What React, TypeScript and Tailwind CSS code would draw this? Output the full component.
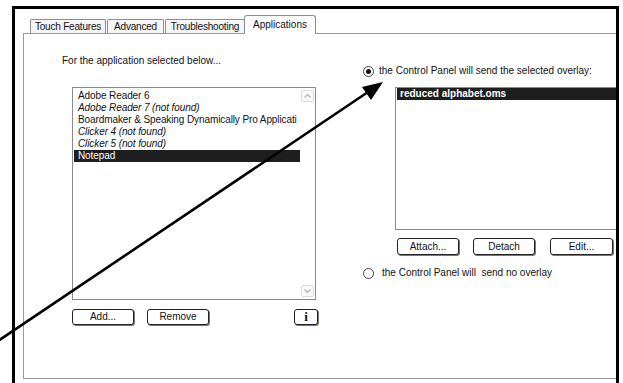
import React from "react";

const font = { fontFamily: '"Liberation Sans", Arial, sans-serif' };

function Tab({ label, w, selected }: { label: string; w: string; selected?: boolean }) {
  if (selected) {
    return (
      <div
        className={`relative z-10 -mb-px -ml-[2px] flex h-[19px] ${w} items-start justify-center rounded-t-[3px] border border-b-0 border-[#8c8c8c] bg-white pt-[3px] text-[10px] leading-[12px] text-[#111]`}
      >
        {label}
      </div>
    );
  }
  return (
    <div
      className={`flex h-[14px] ${w} items-center justify-center whitespace-nowrap rounded-t-[2px] border border-b-0 border-[#8c8c8c] bg-[#f6f6f6] pt-px text-[10px] leading-[12px] tracking-[-0.2px] text-[#111]`}
    >
      {label}
    </div>
  );
}

function Chevron({ up }: { up?: boolean }) {
  return (
    <div className="flex h-[12px] w-[13px] items-center justify-center rounded-[2px] border border-[#dcdcdc] bg-[#fafafa]">
      <svg width="7" height="4" viewBox="0 0 7 4">
        <path
          d={up ? "M0.5 3.5 L3.5 0.5 L6.5 3.5" : "M0.5 0.5 L3.5 3.5 L6.5 0.5"}
          fill="none"
          stroke="#b4b4b4"
          strokeWidth="1.2"
        />
      </svg>
    </div>
  );
}

function Btn({ label, w, h = "h-[16px]", serif }: { label: string; w: string; h?: string; serif?: boolean }) {
  return (
    <div
      className={`flex ${w} ${h} items-center justify-center rounded-[3px] border border-[#222] bg-white text-[10px] leading-[12px] text-[#111] shadow-[1px_1px_0_0_#777]`}
    >
      {serif ? (
        <span className="text-[13px] font-bold" style={{ fontFamily: '"Liberation Serif", serif' }}>
          {label}
        </span>
      ) : (
        label
      )}
    </div>
  );
}

function Radio({ checked }: { checked?: boolean }) {
  return (
    <div className="flex h-[11px] w-[11px] shrink-0 items-center justify-center rounded-full border border-[#444] bg-white">
      {checked && <div className="h-[5px] w-[5px] rounded-full bg-[#111]" />}
    </div>
  );
}

const apps = [
  { name: "Adobe Reader 6" },
  { name: "Adobe Reader 7 (not found)", missing: true },
  { name: "Boardmaker & Speaking Dynamically Pro Applicati" },
  { name: "Clicker 4 (not found)", missing: true },
  { name: "Clicker 5 (not found)", missing: true },
  { name: "Notepad", selected: true },
];

export default function App() {
  return (
    <div className="relative h-[383px] w-[623px] overflow-hidden bg-white pl-[12px] pt-[6px]" style={font}>
      <div className="h-[400px] w-[607px] overflow-hidden border-x-[3px] border-t-[3px] border-black bg-white pl-[8px] pt-[6px]">
        {/* tabs */}
        <div className="ml-[7px] flex h-[18px] items-end gap-px">
          <Tab label="Touch Features" w="w-[76px]" />
          <Tab label="Advanced" w="w-[57px]" />
          <Tab label="Troubleshooting" w="w-[80px]" />
          <Tab label="Applications" w="w-[72px]" selected />
        </div>

        {/* panel */}
        <div className="flex h-[346px] w-[620px] border border-[#9a9a9a] bg-white">
          {/* left column */}
          <div className="w-[294px] shrink-0 pl-[38px] pt-[21px]">
            <p className="h-[12px] text-[10px] leading-[12px] text-[#111]">For the application selected below...</p>
            <div className="ml-[10px] mt-[20px] flex h-[213px] w-[244px] border border-[#8a8a8a] bg-white">
              <div className="ml-px w-[226px] overflow-hidden pt-[2px]">
                {apps.map((a) => (
                  <div
                    key={a.name}
                    className={`h-[12px] whitespace-nowrap pl-[4px] text-[10px] leading-[12px] tracking-[-0.1px] ${
                      a.selected ? "bg-[#1e1e1e] text-white" : "text-[#111]"
                    } ${a.missing ? "italic" : ""}`}
                  >
                    {a.name}
                  </div>
                ))}
              </div>
              <div className="ml-auto mr-[1px] flex flex-col justify-between py-[2px]">
                <Chevron up />
                <Chevron />
              </div>
            </div>
            <div className="ml-[10px] mt-[9px] flex w-[246px] items-center">
              <Btn label="Add..." w="w-[62px]" />
              <div className="ml-[13px]">
                <Btn label="Remove" w="w-[62px]" />
              </div>
              <div className="ml-auto">
                <Btn label="i" w="w-[24px]" serif />
              </div>
            </div>
          </div>

          {/* right column */}
          <div className="ml-[45px] w-[280px] shrink-0 pt-[31px]">
            <div className="flex h-[12px] items-center gap-[5px]">
              <Radio checked />
              <span className="whitespace-nowrap text-[10px] leading-[12px] text-[#111]">
                the Control Panel will send the selected overlay:
              </span>
            </div>
            <div className="ml-[32px] mt-[10px] h-[143px] w-[260px] border border-[#8a8a8a] bg-white">
              <div className="ml-px h-[12px] whitespace-nowrap bg-[#1e1e1e] pl-[3px] text-[10px] font-bold leading-[12px] text-white">
                reduced alphabet.oms
              </div>
            </div>
            <div className="ml-[34px] mt-[8px] flex items-center">
              <Btn label="Attach..." w="w-[62px]" h="h-[17px]" />
              <div className="ml-[14px]">
                <Btn label="Detach" w="w-[62px]" h="h-[17px]" />
              </div>
              <div className="ml-[15px]">
                <Btn label="Edit..." w="w-[63px]" h="h-[17px]" />
              </div>
            </div>
            <div className="mt-[12px] flex h-[12px] items-center gap-[8px]">
              <Radio />
              <span className="whitespace-nowrap text-[10px] leading-[12px] text-[#111]">
                the Control Panel will&nbsp; send no overlay
              </span>
            </div>
          </div>
        </div>
      </div>

      {/* callout arrow */}
      <svg className="pointer-events-none absolute left-0 top-0" width="623" height="383" viewBox="0 0 623 383">
        <line x1="-2" y1="341" x2="368" y2="92" stroke="#000" strokeWidth="2.6" />
        <polygon points="383,82 362,87 371,100" fill="#000" />
      </svg>
    </div>
  );
}
